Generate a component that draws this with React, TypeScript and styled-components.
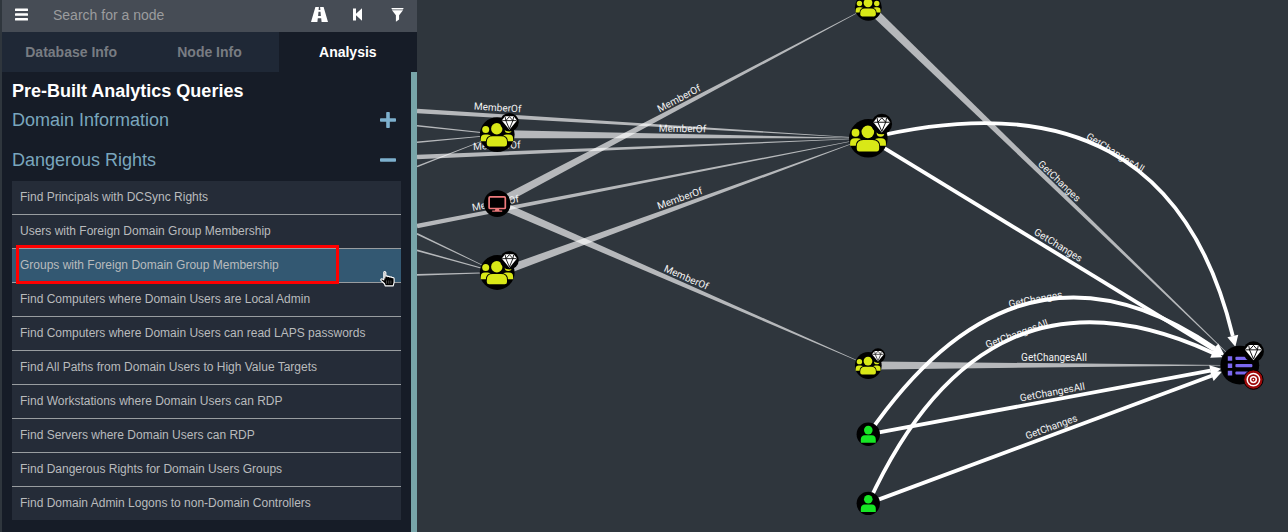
import React from 'react';
import styled, { createGlobalStyle } from 'styled-components';

const GlobalStyle = createGlobalStyle`
  *, *::before, *::after { box-sizing: border-box; }
  body {
    margin: 0;
    background: #2f363d;
    font-family: "Liberation Sans", Arial, sans-serif;
  }
  button, input { font-family: inherit; }
`;

const Page = styled.div`
  display: flex;
  min-height: 100vh;
  padding-left: 2px;
  overflow: hidden;
`;

const Sidebar = styled.aside`
  display: flex;
  flex-direction: column;
  flex: 0 0 415px;
  background: #161c27;
`;

const SearchBar = styled.form`
  display: flex;
  align-items: center;
  height: 32px;
  padding-bottom: 3px;
  background: #464c55;
`;

const IconButton = styled.button`
  display: flex;
  align-items: center;
  justify-content: center;
  width: 39px;
  height: 28px;
  padding: 0;
  border: 0;
  background: transparent;
  color: #fff;
  cursor: pointer;
`;

const SearchInput = styled.input`
  flex: 1;
  min-width: 0;
  height: 28px;
  padding: 0 12px;
  border: 0;
  outline: 0;
  background: transparent;
  color: #fff;
  font-size: 14px;
  &::placeholder { color: #9b9c9e; opacity: 1; }
`;

const TabBar = styled.div`
  display: flex;
  height: 40px;
`;

const Tab = styled.button<{ $active?: boolean }>`
  flex: 1;
  padding: 0;
  border: 0;
  background: ${({ $active }) => ($active ? '#161c27' : '#1f2836')};
  color: ${({ $active }) => ($active ? '#fff' : '#787c82')};
  font-size: 14px;
  font-weight: 700;
  cursor: pointer;
`;

const Panel = styled.section`
  flex: 1;
  padding: 9px 10px 12px;
  border-right: 6px solid #78a5a9;
`;

const PanelTitle = styled.h1`
  margin: 0;
  color: #fff;
  font-size: 18px;
  line-height: 20px;
`;

const GroupHeading = styled.h2`
  margin: 0;
  font-size: 18px;
  font-weight: 400;
`;

const GroupToggle = styled.button`
  display: flex;
  align-items: center;
  justify-content: space-between;
  width: 100%;
  height: 40px;
  padding: 0 5px 2px 0;
  border: 0;
  background: transparent;
  color: #7aa6bd;
  font-size: 18px;
  cursor: pointer;
`;

const QueryList = styled.ul`
  margin: 0;
  padding: 0;
  list-style: none;
`;

const QueryItem = styled.li`
  position: relative;
  & + & { border-top: 1px solid #999da0; }
`;

const QueryButton = styled.button<{ $hovered?: boolean }>`
  display: block;
  width: 100%;
  height: 33px;
  padding: 0 8px 1px;
  border: 0;
  background: ${({ $hovered }) => ($hovered ? '#335872' : '#252c38')};
  color: #b9bbbd;
  font-size: 12px;
  text-align: left;
  cursor: pointer;
`;

const Marker = styled.div`
  position: absolute;
  z-index: 1;
  top: -4px;
  left: 4px;
  width: 323px;
  height: 39px;
  border: 3px solid #f00;
  pointer-events: none;
`;

const HandCursor = styled.svg`
  position: absolute;
  z-index: 2;
  top: 22px;
  right: 5px;
  pointer-events: none;
`;

const GraphCanvas = styled.svg`
  display: block;
  flex: 1;
  min-width: 0;
`;

const EdgeLabel = styled.text`
  fill: #f2f2f2;
  font-family: Roboto, sans-serif;
  font-size: 10px;
  text-anchor: middle;
`;

const queries = [
  'Find Principals with DCSync Rights',
  'Users with Foreign Domain Group Membership',
  'Groups with Foreign Domain Group Membership',
  'Find Computers where Domain Users are Local Admin',
  'Find Computers where Domain Users can read LAPS passwords',
  'Find All Paths from Domain Users to High Value Targets',
  'Find Workstations where Domain Users can RDP',
  'Find Servers where Domain Users can RDP',
  'Find Dangerous Rights for Domain Users Groups',
  'Find Domain Admin Logons to non-Domain Controllers',
];

const HOVERED_QUERY = 2;

type Point = [number, number];

/** Edge that narrows from its source width down to its target width. */
function TaperedEdge({ from, to, w0, w1 = 0.6 }: { from: Point; to: Point; w0: number; w1?: number }) {
  const dx = to[0] - from[0];
  const dy = to[1] - from[1];
  const len = Math.hypot(dx, dy);
  const nx = -dy / len / 2;
  const ny = dx / len / 2;
  const pts: Point[] = [
    [from[0] + nx * w0, from[1] + ny * w0],
    [to[0] + nx * w1, to[1] + ny * w1],
    [to[0] - nx * w1, to[1] - ny * w1],
    [from[0] - nx * w0, from[1] - ny * w0],
  ];
  return <polygon points={pts.map((p) => p.join(',')).join(' ')} fill="#fff" fillOpacity={0.65} />;
}

/** Highlighted edge with an arrow head; `via` bends it into a curve. */
function ArrowEdge({ from, to, via }: { from: Point; to: Point; via?: Point }) {
  const origin = via ?? from;
  const dx = to[0] - origin[0];
  const dy = to[1] - origin[1];
  const len = Math.hypot(dx, dy);
  const ux = dx / len;
  const uy = dy / len;
  const tip: Point = [to[0] - ux * 19, to[1] - uy * 19];
  const base: Point = [to[0] - ux * 30, to[1] - uy * 30];
  const bend = via ? `Q${via.join(' ')} ` : 'L';
  return (
    <g>
      <path d={`M${from.join(' ')}${bend}${base.join(' ')}`} fill="none" stroke="#fff" strokeWidth={3.8} />
      <polygon
        fill="#fff"
        points={`${tip.join(',')} ${base[0] - uy * 5.6},${base[1] + ux * 5.6} ${base[0] + uy * 5.6},${base[1] - ux * 5.6}`}
      />
    </g>
  );
}

function Label({ at, angle, children }: { at: Point; angle: number; children: string }) {
  return <EdgeLabel transform={`translate(${at[0]} ${at[1]}) rotate(${angle})`}>{children}</EdgeLabel>;
}

function GemBadge({ at, r }: { at: Point; r: number }) {
  return (
    <g transform={`translate(${at[0]} ${at[1]}) scale(${r / 10})`}>
      <circle r="10" fill="#000" />
      <path d="M-4.6-6.4H4.6L8.2-1.8L0 8.2L-8.2-1.8Z" fill="#fff" />
      <path
        d="M-7.8-1.7H7.8M-3.8-1.7L0 7.2L3.8-1.7M-4.6-6L-3.8-1.7L0-6L3.8-1.7L4.6-6"
        fill="none"
        stroke="#000"
        strokeWidth="0.9"
      />
    </g>
  );
}

function GroupNode({ at, r, badge, badgeR = 0 }: { at: Point; r: number; badge?: Point; badgeR?: number }) {
  return (
    <g>
      <g transform={`translate(${at[0]} ${at[1]}) scale(${r / 17.4})`} fill="#d9e817">
        <circle r="17.4" fill="#000" />
        <circle cx="-11.5" cy="-5" r="3.5" />
        <circle cx="11" cy="-5" r="3.5" />
        <path d="M-16.4 6.7V4.2Q-16.4 0-12.2 0H-10Q-7-.2-6 2V6.7Z" />
        <path d="M15.9 6.7V4.2Q15.9 0 11.7 0H9.5Q6.5-.2 5.5 2V6.7Z" />
        <path
          d="M-10.4 9.5V7.5Q-10.4 1.6-4.5 1.6H3.8Q9.8 1.6 9.8 7.5V9.5Q9.8 11.8 7.5 11.8H-8.1Q-10.4 11.8-10.4 9.5Z"
          stroke="#000"
          strokeWidth="2"
          paintOrder="stroke"
        />
        <circle cx="-0.4" cy="-5.8" r="5.7" stroke="#000" strokeWidth="2" paintOrder="stroke" />
      </g>
      {badge && <GemBadge at={badge} r={badgeR} />}
    </g>
  );
}

function UserNode({ at }: { at: Point }) {
  return (
    <g transform={`translate(${at[0]} ${at[1]})`} fill="#17e625">
      <circle r="11.7" fill="#000" />
      <circle cy="-4.2" r="4.3" />
      <path d="M-7.5 8V5.5Q-7.5 1-3.5 1H3.5Q7.5 1 7.5 5.5V8Q7.5 8.5 7 8.5H-7Q-7.5 8.5-7.5 8Z" />
    </g>
  );
}

function ComputerNode({ at }: { at: Point }) {
  return (
    <g transform={`translate(${at[0]} ${at[1]})`}>
      <circle r="13.4" fill="#000" />
      <rect x="-8.1" y="-6.7" width="16.2" height="11.6" rx="1" fill="none" stroke="#ee7a7c" strokeWidth="1.7" />
      <path d="M-1.8 5.4H1.8L2.3 7H5V8.2H-5V7H-2.3Z" fill="#ee7a7c" />
    </g>
  );
}

function DomainNode({ at }: { at: Point }) {
  return (
    <g>
      <g transform={`translate(${at[0]} ${at[1]})`}>
        <circle r="19.4" fill="#000" />
        <g fill="#7b68ee">
          <path d="M-12-9h4.4v4.6h-4.4zM-12-1.8h4.4v4.6h-4.4zM-12 5.6h4.4v4.6h-4.4z" />
          <rect x="-4.4" y="-8.4" width="17" height="3.2" rx="1" />
          <rect x="-4.4" y="-1.2" width="17" height="3.2" rx="1" />
          <rect x="-4.4" y="6.2" width="17" height="3.2" rx="1" />
        </g>
      </g>
      <GemBadge at={[1253.5, 351.6]} r={10.4} />
      <g transform="translate(1253.4 379.6)">
        <circle r="9.7" fill="#9c0909" stroke="#000" strokeWidth="1" />
        <circle r="6.2" fill="none" stroke="#fff" strokeWidth="1.5" />
        <circle r="2.9" fill="none" stroke="#fff" strokeWidth="1.5" />
        <circle r="0.8" fill="#fff" />
      </g>
    </g>
  );
}

function Graph() {
  const top: Point = [868.3, 7.3];
  const hub: Point = [868.3, 138.3];
  const domain: Point = [1239.8, 365.2];
  const userA: Point = [868.3, 434.3];
  const userB: Point = [868.3, 503.4];
  return (
    <GraphCanvas viewBox="417 0 871 532" preserveAspectRatio="xMinYMin slice" role="img" aria-label="Attack path graph">
      <TaperedEdge from={[417, 111]} to={[850, 137.2]} w0={4.6} />
      <TaperedEdge from={[505, 134.3]} to={[850, 138]} w0={8} />
      <TaperedEdge from={[417, 157]} to={[850, 139]} w0={4.6} />
      <TaperedEdge from={[417, 226]} to={[850, 141.5]} w0={4.6} />
      <TaperedEdge from={[505, 270.5]} to={[851, 144]} w0={8} />
      <TaperedEdge from={[505, 199]} to={[856, 13.5]} w0={8} />
      <TaperedEdge from={[505, 207]} to={[856, 360]} w0={8} />
      <TaperedEdge from={[877, 15]} to={[1226, 352]} w0={8} />
      <TaperedEdge from={[875, 365.4]} to={[1221, 365.3]} w0={8} />
      <TaperedEdge from={[417, 125.7]} to={[481, 132.5]} w0={1.6} w1={0.8} />
      <TaperedEdge from={[417, 142.2]} to={[481, 136.4]} w0={1.6} w1={0.8} />
      <TaperedEdge from={[417, 166.5]} to={[481, 141.5]} w0={1.6} w1={0.8} />
      <TaperedEdge from={[417, 233.7]} to={[482, 265]} w0={1.8} w1={0.8} />
      <TaperedEdge from={[417, 250.3]} to={[481, 268]} w0={1.8} w1={0.8} />
      <TaperedEdge from={[417, 274.8]} to={[480, 273]} w0={1.8} w1={0.8} />

      <Label at={[497.5, 111]} angle={3.4}>MemberOf</Label>
      <Label at={[682.5, 132]} angle={0.6}>MemberOf</Label>
      <Label at={[497, 149]} angle={-2.3}>MemberOf</Label>
      <Label at={[496, 206.5]} angle={-11}>MemberOf</Label>
      <Label at={[681, 201.5]} angle={-19.8}>MemberOf</Label>
      <Label at={[680.5, 101.5]} angle={-27.6}>MemberOf</Label>
      <Label at={[685, 280.5]} angle={23.6}>MemberOf</Label>
      <Label at={[1113.5, 155.5]} angle={31.5}>GetChangesAll</Label>
      <Label at={[1057, 183.5]} angle={43.8}>GetChanges</Label>
      <Label at={[1056.5, 248]} angle={31.5}>GetChanges</Label>
      <Label at={[1036, 302.5]} angle={-10.4}>GetChanges</Label>
      <Label at={[1018, 337]} angle={-20.2}>GetChangesAll</Label>
      <Label at={[1054, 361]} angle={0}>GetChangesAll</Label>
      <Label at={[1053, 395.5]} angle={-10.4}>GetChangesAll</Label>
      <Label at={[1052.5, 430]} angle={-20.2}>GetChanges</Label>

      <ArrowEdge from={hub} to={domain} />
      <ArrowEdge from={hub} to={domain} via={[1168, 66]} />
      <ArrowEdge from={userA} to={domain} />
      <ArrowEdge from={userA} to={domain} via={[1020, 214]} />
      <ArrowEdge from={userB} to={domain} />
      <ArrowEdge from={userB} to={domain} via={[985, 248]} />

      <GroupNode at={[497.2, 134.6]} r={17.4} badge={[509.4, 122.2]} badgeR={9.3} />
      <GroupNode at={[497.2, 272.5]} r={17.4} badge={[509.4, 260.2]} badgeR={9.3} />
      <ComputerNode at={[497.2, 203.6]} />
      <GroupNode at={top} r={13.4} />
      <GroupNode at={hub} r={19.3} badge={[881.8, 124]} badgeR={10.3} />
      <GroupNode at={[868.3, 365.5]} r={13.4} badge={[878, 355.6]} badgeR={7.3} />
      <UserNode at={userA} />
      <UserNode at={userB} />
      <DomainNode at={domain} />
    </GraphCanvas>
  );
}

export default function App() {
  return (
    <>
      <GlobalStyle />
      <Page>
        <Sidebar>
          <SearchBar role="search">
            <IconButton type="button" aria-label="Menu">
              <svg width="13" height="13" fill="currentColor">
                <rect y="0.4" width="13" height="2.6" rx="0.6" />
                <rect y="5.2" width="13" height="2.6" rx="0.6" />
                <rect y="10" width="13" height="2.6" rx="0.6" />
              </svg>
            </IconButton>
            <SearchInput type="text" aria-label="Search for a node" placeholder="Search for a node" />
            <IconButton type="button" aria-label="Pathfinding">
              <svg width="17" height="15" fill="currentColor">
                <path d="M4.4 0H7.9L7.6 3H9.4L9.1 0H12.6L17 15H10.6L10.2 11.2H6.8L6.4 15H0ZM7.5 4.8L7.1 9H9.900L9.500 4.8Z" />
              </svg>
            </IconButton>
            <IconButton type="button" aria-label="Back">
              <svg width="11" height="13" fill="currentColor">
                <path d="M0 .5H3V5.8L9 .3V12.7L3 7.2V12.5H0Z" />
              </svg>
            </IconButton>
            <IconButton type="button" aria-label="Filter">
              <svg width="13" height="14" fill="currentColor">
                <path d="M.4 0H12.6L12 1.4H1ZM1 2.2H12L8.1 7.2V11.4L4.9 13.8V7.2Z" />
              </svg>
            </IconButton>
          </SearchBar>
          <TabBar role="tablist">
            <Tab role="tab" aria-selected={false}>Database Info</Tab>
            <Tab role="tab" aria-selected={false}>Node Info</Tab>
            <Tab role="tab" aria-selected $active>Analysis</Tab>
          </TabBar>
          <Panel>
            <PanelTitle>Pre-Built Analytics Queries</PanelTitle>
            <GroupHeading>
              <GroupToggle aria-expanded={false}>
                Domain Information
                <svg width="16" height="16" fill="#7db0ce">
                  <rect y="6.2" width="16" height="3.6" rx="0.8" />
                  <rect x="6.2" width="3.6" height="16" rx="0.8" />
                </svg>
              </GroupToggle>
            </GroupHeading>
            <GroupHeading>
              <GroupToggle aria-expanded>
                Dangerous Rights
                <svg width="16" height="16" fill="#7db0ce">
                  <rect y="6.2" width="16" height="3.6" rx="0.8" />
                </svg>
              </GroupToggle>
            </GroupHeading>
            <QueryList>
              {queries.map((query, i) => (
                <QueryItem key={query}>
                  <QueryButton $hovered={i === HOVERED_QUERY}>{query}</QueryButton>
                  {i === HOVERED_QUERY && (
                    <>
                      <Marker />
                      <HandCursor width="16" height="17" viewBox="0 0 17 18">
                        <path
                          d="M4 1.8Q4 .7 5 .7T6.2 1.8V5.5Q7.5 4.8 8.4 5.9Q9.7 5.2 10.7 6.4Q12 5.7 13 7Q15 6.6 15 8.6V12L14 15.8H5.5L4.8 13.5L1 10Q.5 8.4 2 8.3L4 9.4Z"
                          fill="#000"
                          stroke="#fff"
                          strokeWidth="1.2"
                          strokeLinejoin="round"
                        />
                        <path d="M4.500 1.500V8H5.700V1.500Z" fill="#fff" />
                        <path d="M7 10V13.5M9.3 10V13.5M11.6 10V13.5" stroke="#777" strokeWidth="0.7" />
                      </HandCursor>
                    </>
                  )}
                </QueryItem>
              ))}
            </QueryList>
          </Panel>
        </Sidebar>
        <Graph />
      </Page>
    </>
  );
}
